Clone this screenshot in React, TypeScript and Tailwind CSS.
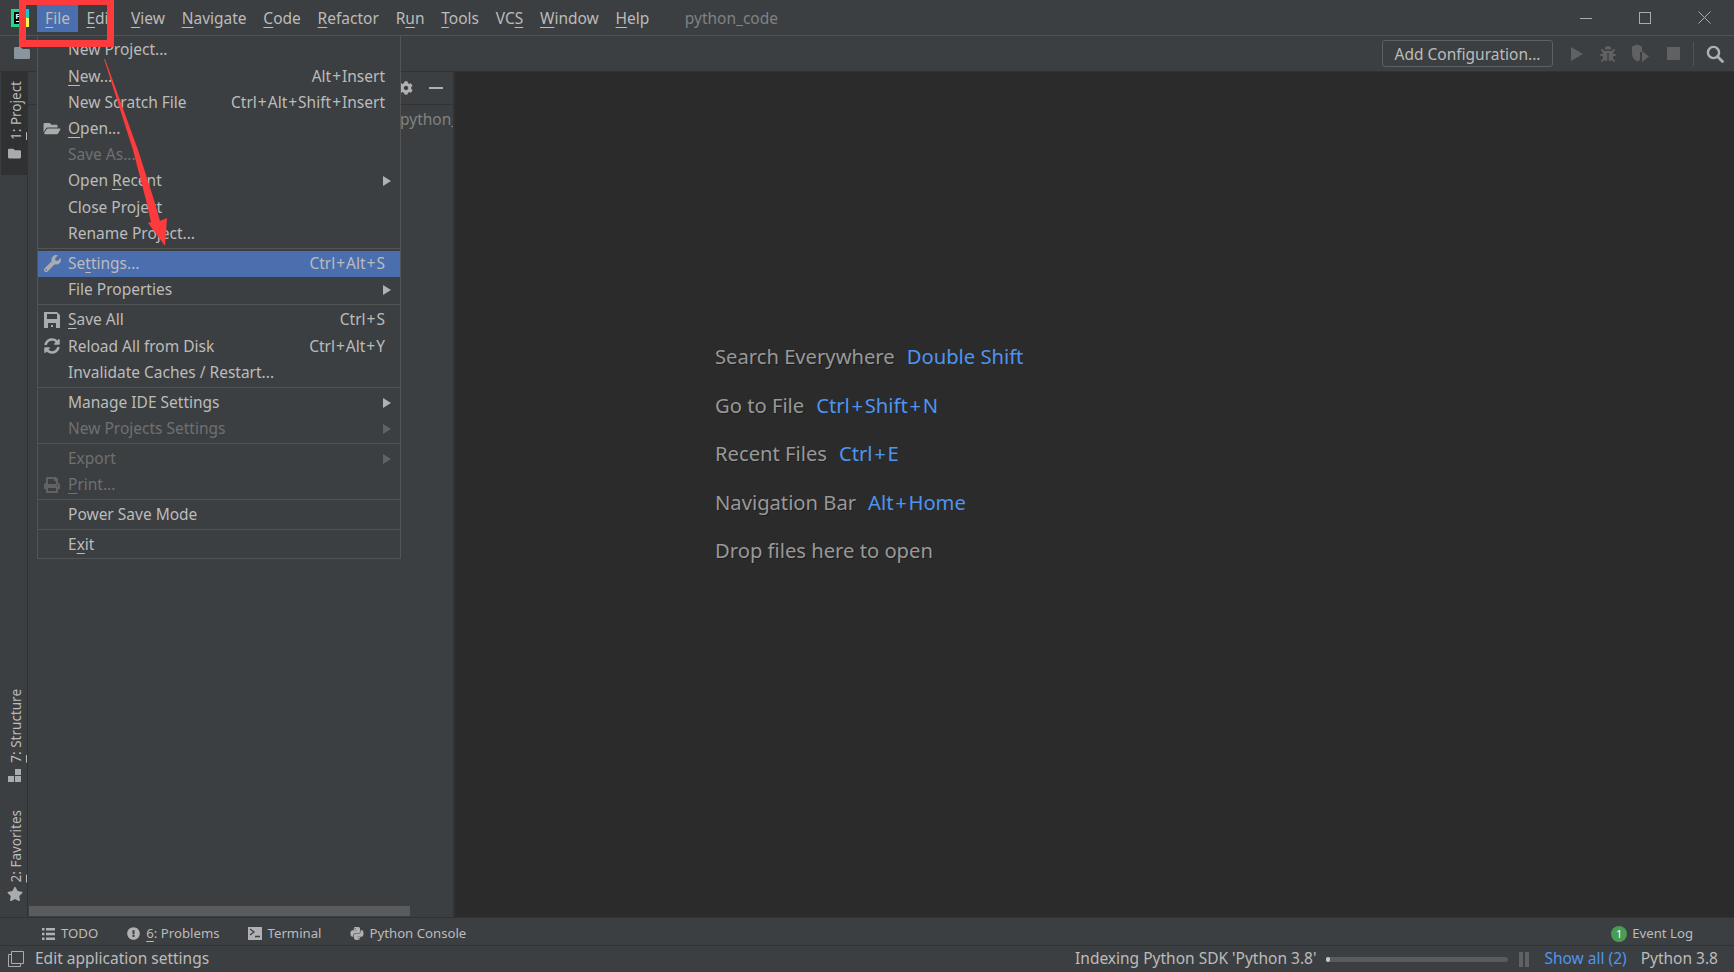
import React from "react";
import { FaWrench, FaFolderOpen, FaFolder, FaSyncAlt, FaPrint, FaBug, FaCog, FaStar, FaPython, FaExclamationCircle } from "react-icons/fa";

const U = ({ children }: { children: React.ReactNode }) => <span className="underline underline-offset-[3px] decoration-1">{children}</span>;

const Keys = ({ text, plus }: { text: string; plus: string }) => (
  <>
    {text.split("+").map((part, i) => (
      <React.Fragment key={part}>
        {i > 0 && <span className={plus}>+</span>}
        {part}
      </React.Fragment>
    ))}
  </>
);

const menuBar: [string, string, string][] = [
  ["", "E", "dit"], ["", "V", "iew"], ["", "N", "avigate"], ["", "C", "ode"], ["", "R", "efactor"], ["R", "u", "n"], ["", "T", "ools"], ["VC", "S", ""], ["", "W", "indow"], ["", "H", "elp"],
];

type Item = { label: React.ReactNode; key_?: string; icon?: React.ReactNode; arrow?: boolean; off?: boolean; on?: boolean };

const Row = ({ label, key_, icon, arrow, off, on }: Item) => (
  <div className={`relative flex items-center pl-[30px] pr-[15px] h-[26.2px] ${on ? "bg-[#4b6eaf]" : ""} ${off ? "text-[#6e7072]" : "text-[#bbbbbb]"}`}>
    {icon && <span className={`absolute left-[4px] w-[20px] flex justify-center ${off ? "text-[#606264]" : "text-[#a9abad]"}`}>{icon}</span>}
    <span className="flex-1 whitespace-nowrap">{label}</span>
    {key_ && <span className="whitespace-nowrap"><Keys text={key_} plus="mx-[1px]" /></span>}
    {arrow && (
      <svg className={`absolute right-[9px] w-[8px] h-[10px] ${off ? "text-[#606264]" : "text-[#afb1b3]"}`} viewBox="0 0 8 10">
        <path d="M0 0l8 5-8 5z" fill="currentColor" />
      </svg>
    )}
  </div>
);

const Sep = ({ h = "h-[4px]" }: { h?: string }) => <div className={`${h} flex items-center`}><div className="h-[1px] w-full bg-[#515355]" /></div>;

const Vert = ({ children }: { children: React.ReactNode }) => (
  <span className="ml-[3px] [writing-mode:vertical-rl] rotate-180 text-[13.5px] leading-[18px] text-[#bbbbbb] whitespace-nowrap">{children}</span>
);

const Hint = ({ a, b }: { a: string; b?: string }) => (
  <div className="h-[48.5px] flex items-center gap-[12px] whitespace-nowrap text-[20.2px] text-[#989898] [text-shadow:1px_1px_0_rgba(0,0,0,0.3)]">
    <span>{a}</span>
    {b && <span className="text-[#4f94ee] [text-shadow:none]"><Keys text={b} plus="mx-[1.7px]" /></span>}
  </div>
);

const BottomTab = ({ icon, children, ml }: { icon: React.ReactNode; children: React.ReactNode; ml: string }) => (
  <div className={`flex items-center gap-[6px] ${ml}`}>
    <span className="w-[14px] flex justify-center text-[#afb1b3]">{icon}</span>
    <span className="whitespace-nowrap">{children}</span>
  </div>
);

export default function App() {
  return (
    <div className="relative w-[1734px] h-[972px] overflow-hidden flex flex-col bg-[#3c3f41] text-[#bbbbbb] text-[15.5px] font-['Noto_Sans','Open_Sans',sans-serif]">
      {/* title bar */}
      <div className="h-[36px] shrink-0 flex items-center border-b border-[#505254]">
        <svg className="ml-[11px] w-[18px] h-[18px]" viewBox="0 0 18 18">
          <defs>
            <linearGradient id="pc" x1="0" y1="1" x2="1" y2="0">
              <stop offset="0" stopColor="#21d789" />
              <stop offset="0.55" stopColor="#21d789" />
              <stop offset="1" stopColor="#07c3f2" />
            </linearGradient>
          </defs>
          <rect width="18" height="18" fill="url(#pc)" />
          <rect x="13" y="9" width="5" height="9" fill="#fcf84a" />
          <rect x="3" y="3" width="12" height="12" fill="#000" />
          <rect x="5" y="12" width="5" height="1" fill="#fff" />
          <text x="4.5" y="10" fontSize="8" fontWeight="700" fill="#fff" fontFamily="Liberation Sans">P</text>
        </svg>
        <div className="ml-[8px] flex items-center h-[30px] mt-[-1px]">
          <div className="h-[30px] w-[41px] bg-[#4b6eaf] flex items-center justify-center pt-[3px] text-[#bbbbbb]"><span><U>F</U>ile</span></div>
          {menuBar.map(([p, u, s]) => (
            <div key={u + s} className="px-[8.4px] pt-[3px] whitespace-nowrap"><span>{p}</span><U>{u}</U><span>{s}</span></div>
          ))}
          <div className="ml-[27px] pt-[3px] text-[#7f8284] whitespace-nowrap">python_code</div>
        </div>
        <div className="ml-auto flex items-center pr-[23px] gap-[47px] text-[#a9abad]">
          <svg className="w-[12px] h-[12px]" viewBox="0 0 12 12"><path d="M0 6.5h12" stroke="currentColor" /></svg>
          <svg className="w-[12px] h-[12px]" viewBox="0 0 12 12"><rect x=".5" y=".5" width="11" height="11" fill="none" stroke="currentColor" /></svg>
          <svg className="w-[13px] h-[13px]" viewBox="0 0 13 13"><path d="M.5.5l12 12M12.5.5l-12 12" stroke="currentColor" /></svg>
        </div>
      </div>
      {/* toolbar */}
      <div className="h-[36px] shrink-0 flex items-center border-b border-[#323232]">
        <FaFolder className="ml-[13px] mt-[-2px] w-[18px] h-[16px] text-[#8a969e]" />
        <div className="ml-auto flex items-center pr-[10px]">
          <div className="h-[27px] w-[171px] pt-[2px] border border-[#5e6060] rounded-[3px] flex items-center justify-center whitespace-nowrap text-[#bbbbbb]">Add Configuration...</div>
          <svg className="ml-[18px] w-[12px] h-[14px] text-[#5f6163]" viewBox="0 0 12 14"><path d="M0 0l12 7-12 7z" fill="currentColor" /></svg>
          <FaBug className="ml-[17px] w-[16px] h-[16px] text-[#5f6163]" />
          <svg className="ml-[15px] w-[19px] h-[19px] text-[#5f6163]" viewBox="0 0 19 19"><path d="M1 2.5 6 .5l5 2v5.5H9v8l-3 1.5C3 16 1 13 1 9.5z" fill="currentColor" /><path d="M11 7l7 5.5-7 5.5z" fill="currentColor" /></svg>
          <div className="ml-[17px] w-[13px] h-[13px] bg-[#5f6163]" />
          <div className="ml-[13px] w-[1px] h-[24px] bg-[#505254]" />
          <svg className="ml-[12px] w-[18px] h-[18px] text-[#afb1b3]" viewBox="0 0 18 18"><circle cx="7.5" cy="7.5" r="5.6" fill="none" stroke="currentColor" strokeWidth="2.4" /><path d="M11.5 11.5l5 5" stroke="currentColor" strokeWidth="2.8" strokeLinecap="round" /></svg>
        </div>
      </div>
      {/* middle */}
      <div className="flex-1 min-h-0 flex">
        <div className="w-[28px] shrink-0 flex flex-col items-center border-r border-[#323232] pl-[1px]">
          <div className="h-[103px] w-full bg-[#2f3132] flex flex-col items-center pt-[9px] gap-[7px]">
            <Vert><U>1</U>: Project</Vert>
            <FaFolder className="ml-[1px] w-[15px] h-[13px] text-[#a9abad]" />
          </div>
          <div className="mt-auto flex flex-col items-center gap-[6px] mb-[28px]">
            <Vert><U>7</U>: Structure</Vert>
            <svg className="ml-[1px] w-[13px] h-[13px] text-[#a9abad]" viewBox="0 0 13 13"><path d="M7 0h6v6H7zM0 7h6v6H0zM7 7h6v6H7z" fill="currentColor" /></svg>
          </div>
          <div className="flex flex-col items-center gap-[4px] mb-[15px]">
            <Vert><U>2</U>: Favorites</Vert>
            <FaStar className="ml-[1px] w-[16px] h-[16px] text-[#a9abad]" />
          </div>
        </div>
        <div className="w-[427px] shrink-0 flex flex-col border-r-2 border-[#323232]">
          <div className="h-[33px] shrink-0 flex items-center justify-end gap-[16px] pr-[10px] border-b border-[#323232] text-[#afb1b3]">
            <FaCog className="w-[14px] h-[14px]" />
            <div className="w-[14px] h-[2px] bg-[#afb1b3]" />
          </div>
          <div className="pl-[372px] pt-[3px] overflow-hidden whitespace-nowrap text-[#7f8284]">python_code</div>
          <div className="mt-auto mb-[1px] ml-[1px] w-[381px] h-[10px] bg-[#595b5d]" />
        </div>
        <div className="flex-1 bg-[#2b2b2b] pl-[260px] pt-[260px]">
          <Hint a="Search Everywhere" b="Double Shift" />
          <Hint a="Go to File" b="Ctrl+Shift+N" />
          <Hint a="Recent Files" b="Ctrl+E" />
          <Hint a="Navigation Bar" b="Alt+Home" />
          <Hint a="Drop files here to open" />
        </div>
      </div>
      {/* tool windows bar */}
      <div className="h-[28px] shrink-0 flex items-center pt-[5px] border-t border-[#323232] text-[13.2px]">
        <BottomTab ml="ml-[41px]" icon={<svg className="w-[13px] h-[12px]" viewBox="0 0 13 12"><path d="M0 0h2.5v2.5H0zM4 0h9v2.5H4zM0 4.7h2.5v2.5H0zM4 4.7h9v2.5H4zM0 9.4h2.5V12H0zM4 9.4h9V12H4z" fill="currentColor" /></svg>}>TODO</BottomTab>
        <BottomTab ml="ml-[28px]" icon={<FaExclamationCircle className="w-[13px] h-[13px]" />}><U>6</U>: Problems</BottomTab>
        <BottomTab ml="ml-[28px]" icon={<svg className="w-[14px] h-[13px]" viewBox="0 0 14 13"><path d="M0 0h14v13H0z" fill="currentColor" /><path d="M2 2l4 3-4 3M7 9.5h5" stroke="#3c3f41" strokeWidth="1.3" fill="none" /></svg>}>Terminal</BottomTab>
        <BottomTab ml="ml-[28px]" icon={<FaPython className="w-[15px] h-[15px]" />}>Python Console</BottomTab>
        <div className="ml-auto flex items-center gap-[5px] pr-[41px]">
          <span className="w-[16px] h-[16px] rounded-full bg-[#499c54] flex items-center justify-center text-[11px] text-white">1</span>
          <span>Event Log</span>
        </div>
      </div>
      {/* status bar */}
      <div className="h-[27px] shrink-0 flex items-center border-t border-[#323232]">
        <svg className="ml-[8px] w-[16px] h-[16px] text-[#a9abad]" viewBox="0 0 16 16"><path d="M3.5.5h12v12h-12z" fill="none" stroke="currentColor" /><path d="M3 3.5H.5v12h12V13" fill="none" stroke="currentColor" /></svg>
        <span className="ml-[11px] whitespace-nowrap">Edit application settings</span>
        <div className="ml-auto flex items-center pr-[16px]">
          <span className="whitespace-nowrap">Indexing Python SDK 'Python 3.8'</span>
          <div className="ml-[10px] w-[182px] h-[5px] rounded-full bg-[#595b5d] relative"><div className="w-[4px] h-[5px] rounded-full bg-[#c8c8c8]" /></div>
          <div className="ml-[11px] w-[10px] h-[15px] flex justify-between"><div className="w-[4px] bg-[#5f6163]" /><div className="w-[4px] bg-[#5f6163]" /></div>
          <span className="ml-[15px] text-[#4f94ee] whitespace-nowrap">Show all (2)</span>
          <span className="ml-[14px] whitespace-nowrap">Python 3.8</span>
        </div>
      </div>

      {/* File menu */}
      <div className="absolute left-[37px] top-[36px] w-[364px] pt-[1px] border border-[#515355] border-t-0 bg-[#3c3f41]">
        <Row label="New Project..." />
        <Row label={<><U>N</U>ew...</>} key_="Alt+Insert" />
        <Row label="New Scratch File" key_="Ctrl+Alt+Shift+Insert" />
        <Row label={<><U>O</U>pen...</>} icon={<FaFolderOpen className="w-[18px] h-[15px]" />} />
        <Row label="Save As..." off />
        <Row label={<>Open <U>R</U>ecent</>} arrow />
        <Row label="Close Project" />
        <Row label="Rename Project..." />
        <Sep />
        <Row label={<>Se<U>t</U>tings...</>} key_="Ctrl+Alt+S" on icon={<FaWrench className="w-[17px] h-[17px]" />} />
        <Row label="File Properties" arrow />
        <Sep />
        <Row label={<><U>S</U>ave All</>} key_="Ctrl+S" icon={
          <svg className="w-[16px] h-[16px]" viewBox="0 0 16 16"><path d="M0 0h13l3 3v13H0zM3 2v5h10V2zM4 11v5h8v-5z" fill="currentColor" fillRule="evenodd" /><path d="M7 13h2v2H7z" fill="currentColor" /></svg>
        } />
        <Row label="Reload All from Disk" key_="Ctrl+Alt+Y" icon={<FaSyncAlt className="w-[16px] h-[16px]" />} />
        <Row label="Invalidate Caches / Restart..." />
        <Sep />
        <Row label="Manage IDE Settings" arrow />
        <Row label="New Projects Settings" arrow off />
        <Sep />
        <Row label="Export" arrow off />
        <Row label={<><U>P</U>rint...</>} off icon={<FaPrint className="w-[18px] h-[16px]" />} />
        <Sep h="h-[3px]" />
        <Row label="Power Save Mode" />
        <Sep />
        <Row label={<>E<U>x</U>it</>} />
      </div>

      {/* red annotation */}
      <svg className="absolute left-0 top-0 w-[180px] h-[260px] pointer-events-none" viewBox="0 0 180 260">
        <path d="M19 0h95v47H19zM26 5v35h81V5z" fill="#fd3a3c" fillRule="evenodd" />
        <path d="M104 59L133 150L146 200L151 222L148 223L165 246L167 218L160 221L154 200L138 150L105 59Z" fill="#fd3a3c" />
      </svg>
    </div>
  );
}
